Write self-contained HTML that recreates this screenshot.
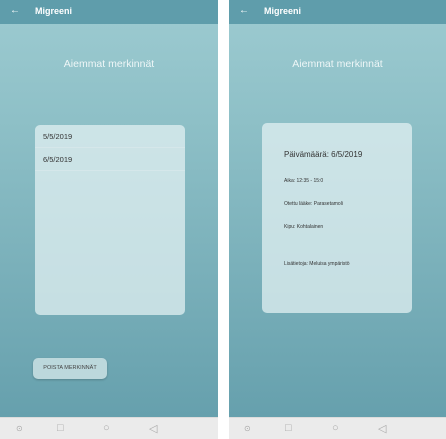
<!DOCTYPE html><html><head><style>
*{margin:0;padding:0;box-sizing:border-box}
body{width:446px;height:439px;background:#fff;position:relative;overflow:hidden;font-family:"Liberation Sans",sans-serif}
.ph{position:absolute;top:0;width:218px;height:439px;background:linear-gradient(#9dcbd1 0,#8ec0c7 120px,#66a0ad 417px)}
.hd{position:absolute;left:0;top:0;right:0;height:24px;background:#5f9dab;color:#fff;font-size:9px;font-weight:bold}
.hd .a{position:absolute;left:10px;top:5px;font-size:10px;font-weight:normal}
.hd .t{position:absolute;left:35px;top:6px}
.ti{position:absolute;top:58px;left:0;right:0;text-align:center;color:#eef6f7;font-size:10.5px}
.card{position:absolute;background:rgba(225,240,242,.75);border-radius:5px}
.nav{position:absolute;left:0;right:0;top:417px;height:22px;background:#ebebeb;border-top:1px solid #dcdcdc}
.nav span{position:absolute;top:4px;color:#aaa;font-size:11px}
.row{height:23px;border-bottom:1px solid #d5e7ea;font-size:7.5px;color:#333;padding:7px 0 0 8px}
.l{position:absolute;left:22px;font-size:5px;color:#333}
</style></head><body>
<div class="ph" style="left:0">
 <div class="hd"><span class="a">←</span><span class="t">Migreeni</span></div>
 <div class="ti">Aiemmat merkinnät</div>
 <div class="card" style="left:35px;top:125px;width:150px;height:190px"><div class="row">5/5/2019</div><div class="row">6/5/2019</div></div>
 <div style="position:absolute;left:33px;top:358px;width:74px;height:21px;background:#bcd8dc;border-radius:5px;box-shadow:0 1px 2px rgba(0,0,0,.2);font-size:5.5px;color:#444;text-align:center;line-height:21px">POISTA MERKINNÄT</div>
 <div class="nav"><span style="left:16px;font-size:8px;top:6px">⊙</span><span style="left:57px">□</span><span style="left:103px">○</span><span style="left:149px">◁</span></div>
</div>
<div class="ph" style="left:229px;width:217px">
 <div class="hd"><span class="a">←</span><span class="t">Migreeni</span></div>
 <div class="ti">Aiemmat merkinnät</div>
 <div class="card" style="left:33px;top:123px;width:150px;height:190px">
  <div class="l" style="top:27px;font-size:8px">Päivämäärä: 6/5/2019</div>
  <div class="l" style="top:55px">Aika: 12:35 - 15:0</div>
  <div class="l" style="top:78px">Otettu lääke: Parasetamoli</div>
  <div class="l" style="top:101px">Kipu: Kohtalainen</div>
  <div class="l" style="top:138px">Lisätietoja: Meluisa ympäristö</div>
 </div>
 <div class="nav"><span style="left:15px;font-size:8px;top:6px">⊙</span><span style="left:56px">□</span><span style="left:103px">○</span><span style="left:149px">◁</span></div>
</div>
</body></html>
